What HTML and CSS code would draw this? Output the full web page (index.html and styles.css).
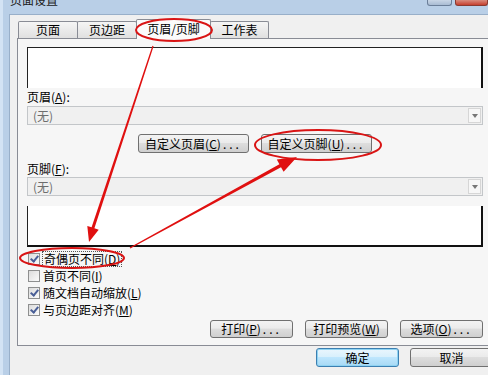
FILE: index.html
```html
<!DOCTYPE html>
<html lang="zh-CN">
<head>
<meta charset="UTF-8">
<title>页面设置</title>
<link rel="stylesheet" href="styles.css">
</head>
<body>
<div class="window">
    <div class="titlebar">
        <span class="title">页面设置</span>
        <div class="caption">
            <span class="cap-btn cap-min"></span>
            <span class="cap-btn cap-close"></span>
        </div>
    </div>
    <div class="client">
        <div class="tabs">
            <div class="tab tab-a">页面</div>
            <div class="tab tab-a">页边距</div>
            <div class="tab tab-b active">页眉/页脚</div>
            <div class="tab tab-c">工作表</div>
        </div>
        <div class="panel">
            <div class="preview preview-head"></div>
            <div class="label">页眉(<u>A</u>):</div>
            <div class="combo"><span>(无)</span><span class="drop"></span></div>
            <div class="btn-row center">
                <button class="btn btn-wide">自定义页眉(<u>C</u>)<span class="dots">...</span></button>
                <button class="btn btn-wide">自定义页脚(<u>U</u>)<span class="dots">...</span></button>
            </div>
            <div class="label label-foot">页脚(<u>F</u>):</div>
            <div class="combo"><span>(无)</span><span class="drop"></span></div>
            <div class="preview preview-foot"></div>
            <div class="checks">
                <div class="check-row"><span class="box on"></span><span class="focus">奇偶页不同(<u>D</u>)</span></div>
                <div class="check-row"><span class="box"></span><span>首页不同(<u>I</u>)</span></div>
                <div class="check-row"><span class="box on"></span><span>随文档自动缩放(<u>L</u>)</span></div>
                <div class="check-row"><span class="box on"></span><span>与页边距对齐(<u>M</u>)</span></div>
            </div>
            <div class="btn-row right">
                <button class="btn">打印(<u>P</u>)<span class="dots">...</span></button>
                <button class="btn">打印预览(<u>W</u>)</button>
                <button class="btn">选项(<u>O</u>)<span class="dots">...</span></button>
            </div>
        </div>
        <div class="btn-row right dialog-buttons">
            <button class="btn btn-default">确定</button>
            <button class="btn">取消</button>
        </div>
    </div>

    <!-- red annotations drawn over the dialog -->
    <svg class="marks" width="488" height="375" viewBox="0 0 488 375">
        <ellipse cx="174" cy="30" rx="38" ry="11" fill="none" stroke="#d91414" stroke-width="2"/>
        <ellipse cx="318" cy="145" rx="63" ry="15" fill="none" stroke="#d91414" stroke-width="2"/>
        <ellipse cx="72" cy="258" rx="52" ry="10" fill="none" stroke="#d91414" stroke-width="2"/>
        <polygon fill="#e01010" points="153.6,46.2 152.4,45.8 91.6,227.3 87.3,225.9 89,242 98.7,229.7 94.4,228.3"/>
        <polygon fill="#e01010" points="130.3,248.5 129.7,247.5 279.4,164.2 276.8,159.6 297,157 283.6,171.8 281,167.2"/>
    </svg>
</div>
</body>
</html>
```

FILE: styles.css
```css
body {
    margin: 0;
    width: 488px;
    height: 375px;
    overflow: hidden;
    background-color: #bcd3ea;
    font-family: "Noto Sans CJK SC", "DejaVu Sans", sans-serif;
    font-size: 12px;
    color: #000;
}
.window {
    position: relative;
    width: 510px;
    height: 375px;
    background: linear-gradient(to right, #d3e3f4 0, #d3e3f4 3px, #b9cfe7 3px);
}
.titlebar {
    width: 488px;
    height: 14px;
    display: flex;
    overflow: hidden;
}
.title {
    padding-left: 10px;
    margin-top: -8px;
    line-height: 16px;
    color: #1b1b1b;
}
.caption {
    margin-left: auto;
    display: flex;
    gap: 3px;
    align-items: flex-start;
}
.cap-btn {
    height: 5px;
    border: 1px solid #6b7f99;
    border-top: none;
    border-radius: 0 0 3px 3px;
}
.cap-min {
    width: 23px;
    background: linear-gradient(#c9d6e6, #a9bcd3);
}
.cap-close {
    width: 31px;
    background: linear-gradient(#d98b7d, #c6402f);
    border-color: #8a3a30;
}
.client {
    margin-left: 9px;
    height: 360px;
    border-top: 1px solid #98afc9;
    border-left: 1px solid #98afc9;
    background-color: #f0f0f0;
    padding: 4px 0 0 7px;
}
.tabs {
    display: flex;
    align-items: flex-end;
    height: 19px;
    padding-left: 1px;
}
.tab {
    height: 17px;
    box-sizing: border-box;
    margin-right: -1px;
    border: 1px solid #898c95;
    border-bottom: none;
    border-radius: 2px 2px 0 0;
    background: linear-gradient(#f5f5f5, #e0e0e0);
    text-align: center;
    line-height: 16px;
}
.tab-a {
    width: 60px;
}
.tab-b {
    width: 75px;
}
.tab-c {
    width: 59px;
}
.tab.active {
    position: relative;
    height: 20px;
    margin-bottom: -1px;
    background: #fbfbfb;
    line-height: 17px;
}
.panel {
    width: 476px;
    box-sizing: border-box;
    border: 1px solid #898c95;
    background-color: #f6f6f6;
    padding: 8px 9px 7px 9px;
}
.preview {
    height: 41px;
    box-sizing: border-box;
    background-color: #fff;
    border-left: 1px solid #222;
    border-right: 2px solid #111;
}
.preview-head {
    border-top: 1px solid #222;
}
.preview-foot {
    margin-top: 10px;
    border-bottom: 2px solid #111;
}
.label {
    height: 18px;
    line-height: 18px;
}
.label-foot {
    margin-top: 8px;
    height: 16px;
    line-height: 16px;
}
.combo {
    height: 19px;
    box-sizing: border-box;
    display: flex;
    align-items: center;
    border: 1px solid #c3c6c9;
    background-color: #f0f0f0;
    color: #6d6d6d;
    padding-left: 5px;
}
.drop {
    margin-left: auto;
    width: 13px;
    height: 15px;
    margin-right: 1px;
    box-sizing: border-box;
    border: 1px solid #d6d6d6;
    background: #f7f7f7;
    display: flex;
    align-items: center;
    justify-content: center;
}
.drop::after {
    content: "";
    border-left: 3px solid transparent;
    border-right: 3px solid transparent;
    border-top: 4px solid #777;
}
.btn-row {
    display: flex;
    gap: 12px;
}
.btn-row.center {
    justify-content: center;
    margin-top: 9px;
}
.btn-row.right {
    justify-content: flex-end;
    margin-top: 2px;
}
.btn {
    width: 83px;
    height: 18px;
    padding: 0;
    border: 1px solid #707070;
    border-radius: 3px;
    background: linear-gradient(#f3f3f3 0%, #ebebeb 45%, #dddddd 50%, #cfcfcf 100%);
    font-family: inherit;
    font-size: 12px;
    line-height: 16px;
    color: #000;
}
.btn-wide {
    width: 111px;
    height: 19px;
}
.dots {
    letter-spacing: 3px;
    margin-left: 2px;
}
.checks {
    margin-top: 3px;
}
.check-row {
    height: 17px;
    display: flex;
    align-items: center;
    gap: 3px;
}
.box {
    width: 12px;
    height: 12px;
    margin-left: 1px;
    box-sizing: border-box;
    border: 1px solid #8e8f8f;
    background: linear-gradient(135deg, #dcdcdc, #fbfbfb);
    position: relative;
}
.box.on::after {
    content: "";
    position: absolute;
    left: 3px;
    top: 0;
    width: 3px;
    height: 6px;
    border-right: 2px solid #4a5f97;
    border-bottom: 2px solid #4a5f97;
    transform: rotate(40deg);
}
.focus {
    outline: 1px dotted #555;
    padding: 0 1px;
    line-height: 14px;
}
.dialog-buttons {
    width: 476px;
    margin-top: 8px;
    gap: 11px;
}
.dialog-buttons .btn {
    height: 19px;
}
.btn-default {
    border-color: #3c7fb1;
    box-shadow: inset 0 0 0 1px #8fd3f2;
    background: linear-gradient(#eaf6fd 0%, #d9f0fc 45%, #bee6fd 50%, #a7d9f5 100%);
}
.marks {
    position: absolute;
    left: 0;
    top: 0;
}
```
